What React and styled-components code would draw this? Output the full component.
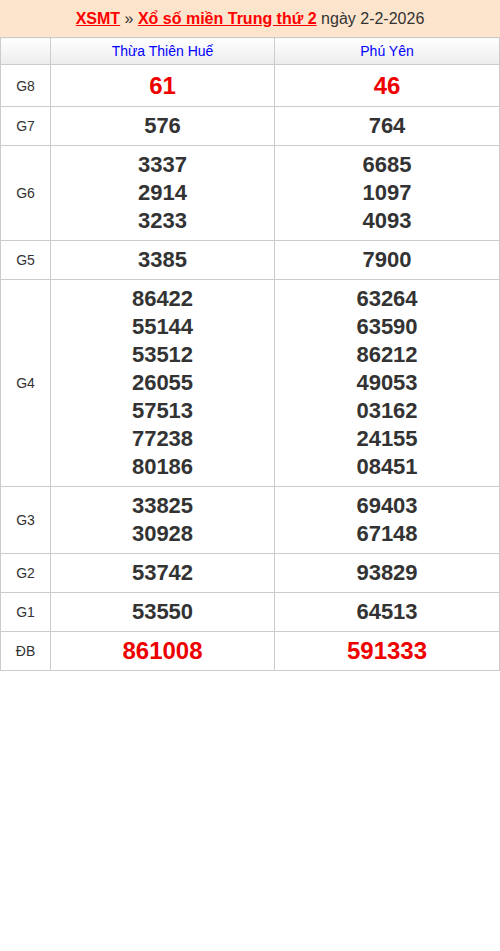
import styled, { createGlobalStyle } from "styled-components"

const GlobalStyle = createGlobalStyle`
    body {
        margin: 0;
        background: #fff;
        font-family: "Liberation Sans", Arial, sans-serif;
        color: #333;
    }
`

const rows = [
    { label: "G8", hue: "g8", a: ["61"], b: ["46"] },
    { label: "G7", a: ["576"], b: ["764"] },
    { label: "G6", a: ["3337", "2914", "3233"], b: ["6685", "1097", "4093"] },
    { label: "G5", a: ["3385"], b: ["7900"] },
    {
        label: "G4",
        a: ["86422", "55144", "53512", "26055", "57513", "77238", "80186"],
        b: ["63264", "63590", "86212", "49053", "03162", "24155", "08451"],
    },
    { label: "G3", a: ["33825", "30928"], b: ["69403", "67148"] },
    { label: "G2", a: ["53742"], b: ["93829"] },
    { label: "G1", a: ["53550"], b: ["64513"] },
    { label: "ĐB", hue: "db", a: ["861008"], b: ["591333"] },
]

export default function App(){
    return (
        <Page>
            <GlobalStyle />
            <Title>
                <TitleLink href="#">XSMT</TitleLink> » <TitleLink href="#">Xổ số miền Trung thứ 2</TitleLink> ngày 2-2-2026
            </Title>
            <Table>
                <thead>
                    <tr>
                        <HeadCell $w="49px"></HeadCell>
                        <HeadCell $w="223px">Thừa Thiên Huế</HeadCell>
                        <HeadCell>Phú Yên</HeadCell>
                    </tr>
                </thead>
                <tbody>
                    {rows.map(r => (
                        <tr key={r.label}>
                            <LabelCell>{r.label}</LabelCell>
                            <NumCell>
                                {r.a.map((n, i) => <Num key={i} $kind={r.hue}>{n}</Num>)}
                            </NumCell>
                            <NumCell>
                                {r.b.map((n, i) => <Num key={i} $kind={r.hue}>{n}</Num>)}
                            </NumCell>
                        </tr>
                    ))}
                </tbody>
            </Table>
        </Page>
    )
}

const Page = styled.div`
    width: 500px;
`
const Title = styled.div`
    background: #fde4cc;
    height: 37px;
    line-height: 37px;
    text-align: center;
    font-size: 16px;
    color: #333;
`
const TitleLink = styled.a`
    color: #f00;
    font-weight: 700;
    text-decoration: underline;
`
const Table = styled.table`
    width: 500px;
    border-collapse: collapse;
    table-layout: fixed;
`
const HeadCell = styled.th`
    width: ${p => p.$w || "auto"};
    height: 26px;
    padding: 0;
    border: 1px solid #ccc;
    background: linear-gradient(#fff, #ececec);
    color: #00f;
    font-size: 14px;
    font-weight: 400;
    text-align: center;
`
const LabelCell = styled.td`
    border: 1px solid #ccc;
    padding: 0;
    font-size: 14px;
    text-align: center;
    color: #333;
`
const NumCell = styled.td`
    border: 1px solid #ccc;
    padding: 5px 0;
    text-align: center;
`
const Num = styled.div`
    font-weight: 700;
    font-size: ${p => p.$kind ? "24px" : "22px"};
    line-height: ${p => p.$kind === "g8" ? "31px" : "28px"};
    color: ${p => p.$kind ? "#e00" : "#333"};
`
